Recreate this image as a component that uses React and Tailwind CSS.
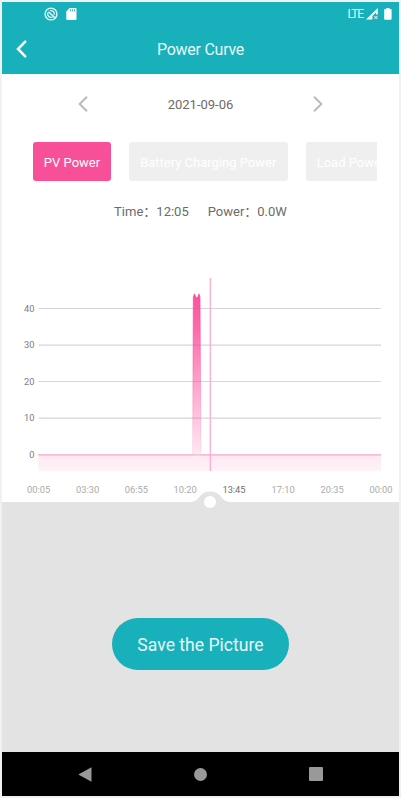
const GRID_LINES = [
  { label: "40", y: 78.5 },
  { label: "30", y: 115.2 },
  { label: "20", y: 151.5 },
  { label: "10", y: 188.2 },
  { label: "0", y: 224.8 },
];

const TIMES = [
  { label: "00:05", x: 36.7 },
  { label: "03:30", x: 85.6 },
  { label: "06:55", x: 134.3 },
  { label: "10:20", x: 183.2 },
  { label: "13:45", x: 232, active: true },
  { label: "17:10", x: 281.1 },
  { label: "20:35", x: 330.1 },
  { label: "00:00", x: 379 },
];

const StatusBar = () => (
  <div className="flex h-[23px] items-center justify-between pr-[7px] pl-[42px]">
    <div className="flex items-center gap-2">
      <svg width="14" height="14" viewBox="0 0 14 14" fill="none" stroke="#e6f7f8">
        <circle cx="7" cy="7" r="5.9" strokeWidth="1.4" />
        <path d="M8.8 9.8A3.3 3.3 0 0 1 4 5.6M6 3.8A3.3 3.3 0 0 1 10.2 7.8" strokeWidth="1.2" />
        <path d="M4.4 4.8 11 10.8" strokeWidth="1.5" />
      </svg>
      <svg width="11" height="12" viewBox="0 0 11 12">
        <path
          d="M3.6 0H9.5a1 1 0 0 1 1 1V11a1 1 0 0 1-1 1H1.3a1 1 0 0 1-1-1V3.4Z"
          fill="#fff"
        />
        <path d="M4.5 1.3v2M6.5 1.3v2M8.5 1.3v2" stroke="#18b0ba" strokeWidth="0.9" />
      </svg>
    </div>
    <div className="flex items-center">
      <span className="text-[12px] leading-none tracking-[-1.1px] text-[#e6f7f8]">LTE</span>
      <svg className="ml-[3px]" width="13" height="12" viewBox="0 0 13 12">
        <path d="M0 11.4 11.8 0V6.5H10V4.6L6.4 8V11.4Z" fill="#fff" />
        <path d="m8.4 8 3 3m0-3-3 3" stroke="#fff" strokeWidth="1" />
      </svg>
      <svg className="ml-[5px]" width="8" height="12" viewBox="0 0 8 12">
        <path
          d="M2.3 0h3.2v1.1H7a.6.6 0 0 1 .6.6V11a.8.8 0 0 1-.8.8H1a.8.8 0 0 1-.8-.8V1.7a.6.6 0 0 1 .6-.6h1.5Z"
          fill="#fff"
        />
      </svg>
    </div>
  </div>
);

const Header = () => (
  <header className="h-[71.5px] shrink-0 bg-[#18b0ba]">
    <StatusBar />
    <div className="grid h-[47px] grid-cols-[40px_1fr_40px] items-center">
      <svg className="ml-[14px]" width="11" height="18" viewBox="0 0 11 18" fill="none">
        <path d="M9.2 1.7 2 9l7.2 7.3" stroke="#fff" strokeWidth="2.5" strokeLinecap="round" />
      </svg>
      <h1 className="pt-[3px] text-center text-[16px] tracking-[-0.25px] text-[#e8f8f9]">
        Power Curve
      </h1>
    </div>
  </header>
);

const DateSwitcher = () => (
  <div className="flex h-[60px] items-center justify-between px-[76px]">
    <svg width="10" height="16" viewBox="0 0 10 16" fill="none" stroke="#b9b9b9">
      <path d="M9 .8 1.6 8 9 15.2" strokeWidth="1.9" />
    </svg>
    <span className="pt-[2px] text-[13px] text-[#6b6b6b]">2021-09-06</span>
    <svg width="10" height="16" viewBox="0 0 10 16" fill="none" stroke="#b9b9b9">
      <path d="M1 .8 8.4 8 1 15.2" strokeWidth="1.9" />
    </svg>
  </div>
);

const Tabs = () => (
  <div className="mr-[22px] ml-[31px] flex h-[56.5px] items-center gap-[18px] overflow-hidden text-[13px] whitespace-nowrap">
    <button className="h-[39px] w-[78px] shrink-0 rounded-[3px] bg-[#f84f99] pt-[2px] text-white">
      PV Power
    </button>
    <button className="h-[39px] w-[158.5px] shrink-0 rounded-[3px] bg-[#efefef] pt-[2px] text-white">
      Battery Charging Power
    </button>
    <button className="h-[39px] w-[91px] shrink-0 rounded-[3px] bg-[#efefef] pt-[2px] text-white">
      Load Power
    </button>
  </div>
);

const Chart = () => (
  <svg
    className="block shrink-0"
    width="397"
    height="272"
    viewBox="0 0 397 272"
    fontFamily="Roboto, sans-serif"
    fontSize="9.3"
  >
    <defs>
      <linearGradient id="area" gradientUnits="userSpaceOnUse" x1="0" y1="64" x2="0" y2="241">
        <stop offset="0" stopColor="#fb4798" stopOpacity="0.95" />
        <stop offset="0.2" stopColor="#fb4798" stopOpacity="0.8" />
        <stop offset="0.5" stopColor="#fb4798" stopOpacity="0.5" />
        <stop offset="0.9" stopColor="#fb4798" stopOpacity="0.13" />
        <stop offset="1" stopColor="#fb4798" stopOpacity="0.07" />
      </linearGradient>
    </defs>

    {GRID_LINES.map(({ label, y }) => (
      <g key={label}>
        <path d={`M36.5 ${y}H379`} stroke="#d6d6d6" strokeWidth="1.2" />
        <text x="32.4" y={y + 3} textAnchor="end" fill="#7c7c7c">
          {label}
        </text>
      </g>
    ))}

    <path
      d="M36.5 224.8H190.6L191.3 67 192.4 63.8 194 67.5H195.5L197 63.8 198 67 199 224.8H379V241H36.5Z"
      fill="url(#area)"
    />
    <path d="M36.5 224.8H191M199 224.8H379" stroke="#f9bbd5" strokeWidth="1.4" />
    <path
      d="M190.6 224.8 191.3 67 192.4 63.8 194 67.5H195.5L197 63.8 198 67 199 224.8"
      fill="none"
      stroke="url(#area)"
      strokeWidth="0.7"
    />
    <path d="M208.3 48V241" stroke="#fba8cd" strokeWidth="1.2" />

    {TIMES.map(({ label, x, active }) => (
      <text key={label} x={x} y="262.6" textAnchor="middle" fill={active ? "#707070" : "#aaaaaa"}>
        {label}
      </text>
    ))}

    {/* bump of the slider handle */}
    <path
      d="M187 272C194 272 195 269.5 198.5 265.5C203.5 260.2 213 260.2 218 265.5C221.5 269.5 223 272 229.5 272Z"
      fill="#e3e3e3"
    />
  </svg>
);

const NavBar = () => (
  <nav className="grid h-[44px] shrink-0 grid-cols-[166px_65px_165px] items-center justify-items-center bg-black">
    <svg width="14" height="15" viewBox="0 0 14 15">
      <path d="M13.5 .3V14.7L.3 7.5Z" fill="#999" />
    </svg>
    <div className="size-[13px] rounded-full bg-[#999]" />
    <div className="size-[14px] rounded-[1px] bg-[#999]" />
  </nav>
);

const App = () => (
  <div className="h-[800px] w-[403px] overflow-hidden bg-white font-['Roboto','Noto_Sans_CJK_SC',sans-serif]">
    <div className="flex h-[798px] w-[401px] flex-col border-2 border-[#f1f1f1] bg-white">
      <Header />
      <main className="flex flex-1 flex-col">
        <DateSwitcher />
        <Tabs />
        <div className="flex h-[40px] items-center justify-center gap-[19px] pt-[3px] text-[13px] text-[#6b6b6b]">
          <span>Time：12:05</span>
          <span>Power：0.0W</span>
        </div>
        <Chart />
        <div className="relative flex flex-1 justify-center bg-[#e3e3e3] pt-[116px]">
          <div className="absolute top-[-6px] left-[202px] size-[12px] rounded-full bg-white" />
          <button className="h-[52px] w-[177px] rounded-full bg-[#18b0ba] pt-[2px] text-[17.6px] text-[#e8f8f9]">
            Save the Picture
          </button>
        </div>
      </main>
      <NavBar />
    </div>
  </div>
);

export default App;
